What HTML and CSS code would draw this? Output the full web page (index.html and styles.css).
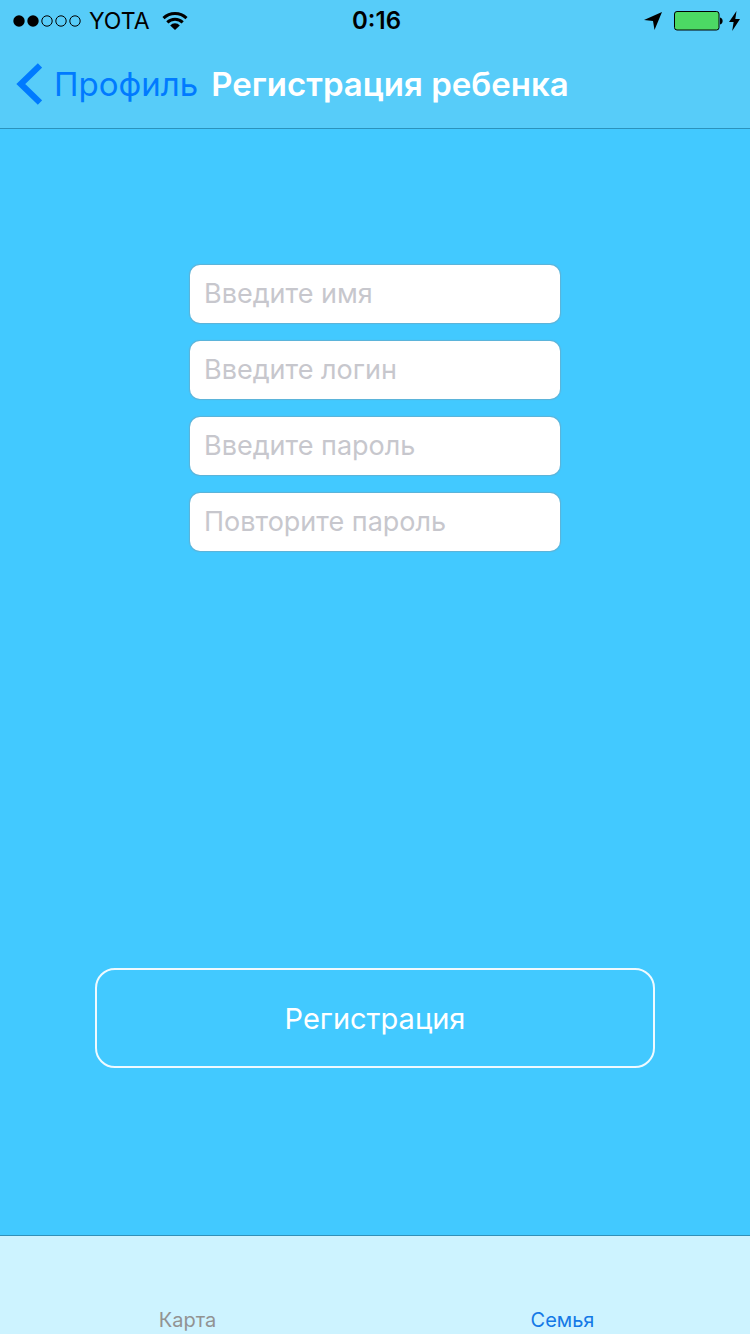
FILE: index.html
```html
<!DOCTYPE html>
<html lang="ru">
<head>
<meta charset="utf-8">
<meta name="viewport" content="width=device-width, initial-scale=1">
<title>Регистрация ребенка</title>
<link rel="stylesheet" href="styles.css">
</head>
<body class="app">
<header class="top">
  <div class="status">
    <div class="status-left">
      <svg class="signal" width="68" height="12" viewBox="0 0 68 12" aria-hidden="true">
        <circle cx="6" cy="6" r="5.700"/>
        <circle cx="20" cy="6" r="5.700"/>
        <g fill="none" stroke="#000" stroke-width="1">
          <circle cx="34" cy="6" r="5.200"/>
          <circle cx="48" cy="6" r="5.200"/>
          <circle cx="62" cy="6" r="5.200"/>
        </g>
      </svg>
      <span class="carrier">YOTA</span>
      <svg class="wifi" width="26" height="18" viewBox="0 0 26 18" aria-hidden="true">
        <g fill="none" stroke="#000" stroke-width="3">
          <path d="M1.500 6.200A16.500 16.500 0 0 1 24.500 6.200"/>
          <path d="M5.300 10.400A11 11 0 0 1 20.700 10.400"/>
        </g>
        <path d="M13 18L8.200 13.400A6.700 6.700 0 0 1 17.800 13.400Z"/>
      </svg>
    </div>
    <time class="clock">0:16</time>
    <div class="status-right">
      <svg width="18" height="18" viewBox="0 0 18 18" aria-hidden="true"><path d="M18 0L10.500 18L9 9L0 8.100Z"/></svg>
      <svg width="49" height="20" viewBox="0 0 49 20" aria-hidden="true">
        <rect x=".5" y=".5" width="44.500" height="18.500" rx="2.500" fill="#4cd964" stroke="#000"/>
        <path d="M46 6.500C49.500 7 49.500 13 46 13.500Z"/>
      </svg>
      <svg width="11" height="20" viewBox="0 0 11 20" aria-hidden="true"><path d="M7.500 0L0 11H4.600L3.200 20L11 8H6.300Z"/></svg>
    </div>
  </div>
  <nav class="navbar">
    <a class="back" href="#">
      <svg width="26" height="42" viewBox="0 0 26 42" aria-hidden="true"><path d="M24 2.400L4.800 21L24 39.600" fill="none" stroke="#007aff" stroke-width="6.200"/></svg>
      <span>Профиль</span>
    </a>
    <h1 class="title">Регистрация ребенка</h1>
  </nav>
</header>
<main class="content">
  <form class="form">
    <div class="fields">
      <input class="field" type="text" placeholder="Введите имя" aria-label="Введите имя">
      <input class="field" type="text" placeholder="Введите логин" aria-label="Введите логин">
      <input class="field" type="password" placeholder="Введите пароль" aria-label="Введите пароль">
      <input class="field" type="password" placeholder="Повторите пароль" aria-label="Повторите пароль">
    </div>
    <button class="submit" type="button">Регистрация</button>
  </form>
</main>
<nav class="tabs">
  <a class="tab" href="#">Карта</a>
  <a class="tab tab-active" href="#" aria-current="page">Семья</a>
</nav>
</body>
</html>
```

FILE: styles.css
```css
* {
  box-sizing: border-box;
}

.app {
  display: flex;
  flex-direction: column;
  min-height: 100vh;
  margin: 0;
  background: #42c9ff;
  color: #000;
  font-family: Inter, "Noto Sans", sans-serif;
}

svg {
  display: block;
  flex: none;
}

.top {
  background: #57ccf9;
  border-bottom: 1px solid #2b93bd;
}

.status {
  display: grid;
  grid-template-columns: 1fr auto 1fr;
  align-items: center;
  height: 42px;
  padding: 0 10px 0 13px;
}

.status-left,
.status-right {
  display: flex;
  align-items: center;
  gap: 8px;
}

.status-right {
  justify-content: flex-end;
  gap: 12px;
}

.status-right svg:last-child {
  margin-left: -6px;
}

.wifi {
  margin-left: 4px;
}

.carrier,
.clock {
  font-size: 23px;
  line-height: 40px;
}

.clock {
  font-size: 24px;
  font-weight: 600;
}

.navbar {
  display: flex;
  align-items: center;
  gap: 13px;
  height: 86px;
  padding: 0 16px 2px;
  white-space: nowrap;
}

.back {
  display: flex;
  align-items: center;
  gap: 12px;
  color: #007aff;
  font-size: 33px;
  text-decoration: none;
}

.title {
  margin: 0;
  color: #fff;
  font-size: 33px;
  font-weight: 600;
}

.content {
  display: flex;
  flex: 1;
}

.form {
  display: flex;
  flex: 1;
  flex-direction: column;
  align-items: center;
  justify-content: space-between;
  gap: 40px;
  padding: 136px 95px 167px;
}

.fields {
  display: flex;
  flex-direction: column;
  gap: 18px;
  width: 100%;
  max-width: 370px;
}

.field {
  width: 100%;
  height: 58px;
  padding: 0 14px 2px;
  border: 0;
  border-radius: 10px;
  background: #fff;
  box-shadow: 0 0 1px 1px #5fb2d6;
  color: #000;
  font-family: inherit;
  font-size: 27px;
}

.field::placeholder {
  color: #c7c7cd;
  opacity: 1;
}

.submit {
  width: 100%;
  height: 100px;
  border: 2px solid #effaff;
  border-radius: 20px;
  background: transparent;
  color: #fff;
  font-family: inherit;
  font-size: 29px;
}

.tabs {
  display: grid;
  grid-template-columns: 1fr 1fr;
  height: 99px;
  background: #cdf3ff;
  border-top: 1px solid #3290b8;
}

.tab {
  display: flex;
  align-items: flex-end;
  justify-content: center;
  padding-bottom: 2px;
  color: #929292;
  font-size: 20px;
  line-height: 24px;
  text-decoration: none;
}

.tab-active {
  color: #1479e6;
}
```
